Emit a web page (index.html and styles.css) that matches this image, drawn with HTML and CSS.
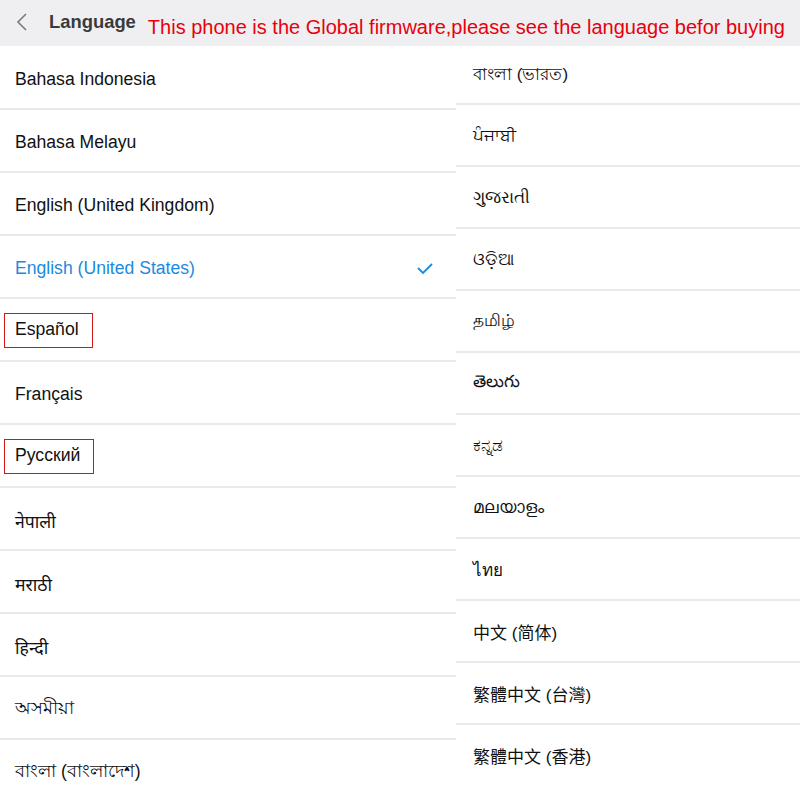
FILE: index.html
```html
<!DOCTYPE html>
<html lang="en">
<head>
    <meta charset="UTF-8">
    <meta name="viewport" content="width=device-width, initial-scale=1.0">
    <title>Language</title>
    <link rel="stylesheet" href="styles.css">
</head>
<body>

    <div class="topbar">
        <svg class="back" width="14" height="20" viewBox="0 0 14 20">
            <polyline points="11,2 3,10 11,18" fill="none" stroke="#7a7a7a" stroke-width="1.6"/>
        </svg>
        <span class="title">Language</span>
        <span class="notice">This phone is the Global firmware,please see the language befor buying</span>
    </div>

    <div class="screens">
        <!-- primera captura -->
        <ul class="list left">
            <li>Bahasa Indonesia</li>
            <li>Bahasa Melayu</li>
            <li>English (United Kingdom)</li>
            <li class="selected">English (United States)
                <svg class="check" width="16" height="12" viewBox="0 0 16 12">
                    <polyline points="1,5 6,10 15,1" fill="none" stroke="#1a8ae0" stroke-width="1.8"/>
                </svg>
            </li>
            <li><span class="mark">Español</span></li>
            <li>Français</li>
            <li><span class="mark">Русский</span></li>
            <li>नेपाली</li>
            <li>मराठी</li>
            <li>हिन्दी</li>
            <li>অসমীয়া</li>
            <li>বাংলা (বাংলাদেশ)</li>
        </ul>

        <!-- segunda captura -->
        <ul class="list right">
            <li>বাংলা (ভারত)</li>
            <li>ਪੰਜਾਬੀ</li>
            <li>ગુજરાતી</li>
            <li>ଓଡ଼ିଆ</li>
            <li>தமிழ்</li>
            <li>తెలుగు</li>
            <li>ಕನ್ನಡ</li>
            <li>മലയാളം</li>
            <li>ไทย</li>
            <li>中文 (简体)</li>
            <li>繁體中文 (台灣)</li>
            <li>繁體中文 (香港)</li>
        </ul>
    </div>

</body>
</html>
```

FILE: styles.css
```css
body {
    margin: 0;
    font-family: "Liberation Sans", Arial, "Noto Sans", "Noto Sans CJK SC", sans-serif;
    background-color: #fff;
    color: #111;
    overflow: hidden;
}
.topbar {
    height: 46px;
    background-color: #efeff2;
    display: flex;
    align-items: flex-start;
    white-space: nowrap;
}
.back {
    margin: 12px 0 0 15px;
}
.title {
    margin: 11px 0 0 20px;
    font-size: 18.4px;
    font-weight: bold;
    color: #3a3a3a;
}
.notice {
    margin: 16px 0 0 12px;
    font-size: 20px;
    color: #e8000c;
}
.screens {
    display: flex;
    align-items: flex-start;
}
.list {
    list-style: none;
    margin: 0;
    padding: 0;
}
.list li {
    display: flex;
    align-items: center;
    box-sizing: border-box;
    font-size: 17px;
    white-space: nowrap;
}
.left {
    width: 456px;
}
.left li {
    height: 63px;
    padding: 4px 0 0 15px;
    font-size: 17.6px;
    border-top: 2px solid #e9e9eb;
}
.left li:first-child {
    height: 62px;
    border-top: none;
}
.right {
    flex: 1;
}
.right li {
    height: 62px;
    padding: 1px 0 0 17px;
    border-top: 2px solid #e9e9eb;
}
.right li:first-child {
    height: 57px;
    border-top: none;
}
.left li.selected {
    color: #1a8ae0;
    justify-content: space-between;
    padding-right: 23px;
}
.mark {
    margin: -3px 0 0 -11px;
    padding: 5px 13px 7px 10px;
    border: 1px solid #d31616;
}
```
